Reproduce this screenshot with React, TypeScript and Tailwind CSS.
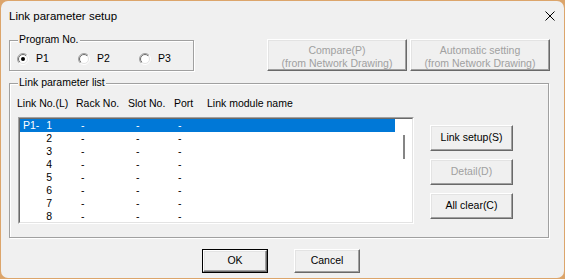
import React, { useId } from "react";

function Radio({ checked }: { checked?: boolean }) {
  const id = useId().replace(/:/g, "");
  return (
    <svg width="12" height="12" viewBox="0 0 12 12" className="shrink-0">
      <defs>
        <linearGradient id={`o${id}`} x1="0" y1="0" x2="1" y2="1">
          <stop offset="0.5" stopColor="#a0a0a0" />
          <stop offset="0.5" stopColor="#ffffff" />
        </linearGradient>
        <linearGradient id={`i${id}`} x1="0" y1="0" x2="1" y2="1">
          <stop offset="0.5" stopColor="#696969" />
          <stop offset="0.5" stopColor="#e3e3e3" />
        </linearGradient>
      </defs>
      <circle cx="6" cy="6" r="5.5" fill="none" stroke={`url(#o${id})`} strokeWidth="1" />
      <circle cx="6" cy="6" r="4.5" fill="#ffffff" stroke={`url(#i${id})`} strokeWidth="1" />
      {checked && <circle cx="6" cy="6" r="2" fill="#000000" />}
    </svg>
  );
}

function Btn({
  className,
  disabled,
  children,
}: {
  className: string;
  disabled?: boolean;
  children: React.ReactNode;
}) {
  return (
    <div
      className={`${className} flex flex-col items-center justify-center border border-t-white border-l-white border-r-[#696969] border-b-[#696969] bg-[#f0f0f0] shadow-[inset_-1px_-1px_0_#a0a0a0,inset_1px_1px_0_#e3e3e3] ${
        disabled ? "text-[#a0a0a0]" : "text-black"
      }`}
    >
      {children}
    </div>
  );
}

function Group({
  className,
  label,
  children,
}: {
  className: string;
  label: string;
  children: React.ReactNode;
}) {
  return (
    <div
      className={`${className} relative border border-[#a0a0a0] shadow-[inset_1px_1px_0_#ffffff,1px_1px_0_#ffffff]`}
    >
      <div className="absolute left-[8px] top-[-8px] bg-[#f0f0f0] px-[1px] leading-[13px]">{label}</div>
      {children}
    </div>
  );
}

const rows = ["1", "2", "3", "4", "5", "6", "7", "8"];

export default function App() {
  return (
    <div className="w-[565px] h-[279px] bg-[#dca56b] p-[1px] font-[Liberation_Sans,Arial,sans-serif] text-[10.5px] text-black">
      <div className="w-full h-full rounded-[7px] bg-[#f0f0f0] flex flex-col">
        {/* title bar */}
        <div className="h-[30px] flex items-center justify-between pl-[8px] pr-[9px] shrink-0">
          <span className="text-[11.5px] leading-[14px]">Link parameter setup</span>
          <svg width="10" height="10" viewBox="0 0 10 10">
            <path d="M0.5 0.5 L9.5 9.5 M9.5 0.5 L0.5 9.5" stroke="#000" strokeWidth="1" />
          </svg>
        </div>

        <div className="pl-[8px] flex flex-col">
          {/* top row */}
          <div className="flex items-start mt-[8px] h-[32px]">
            <Group className="mt-[1px] w-[185px] h-[31px]" label="Program No.">
              <div className="flex pl-[7px] pt-[11px]">
                <div className="w-[61px] flex items-center h-[13px]">
                  <Radio checked />
                  <span className="ml-[7px] leading-[13px]">P1</span>
                </div>
                <div className="w-[61px] flex items-center h-[13px]">
                  <Radio />
                  <span className="ml-[7px] leading-[13px]">P2</span>
                </div>
                <div className="w-[50px] flex items-center h-[13px]">
                  <Radio />
                  <span className="ml-[7px] leading-[13px]">P3</span>
                </div>
              </div>
            </Group>
            <Btn className="ml-[73px] w-[140px] h-[32px] leading-[13px] pt-[3px]" disabled>
              <span>Compare(P)</span>
              <span>(from Network Drawing)</span>
            </Btn>
            <Btn className="ml-[3px] w-[140px] h-[32px] leading-[13px] pt-[3px]" disabled>
              <span>Automatic setting</span>
              <span>(from Network Drawing)</span>
            </Btn>
          </div>

          {/* link parameter list */}
          <Group className="mt-[12px] w-[540px] h-[155px]" label="Link parameter list">
            <div className="flex pl-[7px] mt-[13px] h-[13px] leading-[13px]">
              <span className="w-[59px]">Link No.(L)</span>
              <span className="w-[52px]">Rack No.</span>
              <span className="w-[46px]">Slot No.</span>
              <span className="w-[33px]">Port</span>
              <span>Link module name</span>
            </div>
            <div className="flex items-start">
              <div className="ml-[8px] mt-[7px] w-[396px] h-[107px] border border-t-[#a0a0a0] border-l-[#a0a0a0] border-r-white border-b-white">
                <div className="w-full h-full border border-t-[#696969] border-l-[#696969] border-r-[#e3e3e3] border-b-[#e3e3e3] bg-white flex">
                  <div className="w-[375px] flex flex-col">
                    {rows.map((r, i) => (
                      <div
                        key={i}
                        className={`flex h-[13px] leading-[13px] items-center ${
                          i === 0 ? "bg-[#0078d7] text-white" : "text-black"
                        }`}
                      >
                        <span className="w-[22px] pl-[3px]">{i === 0 ? "P1-" : ""}</span>
                        <span className="w-[10px] text-right">{r}</span>
                        <span className="w-[62px] pl-[29px]">-</span>
                        <span className="w-[55px] pl-[22px]">-</span>
                        <span className="pl-[9px]">-</span>
                      </div>
                    ))}
                  </div>
                  <div className="flex-1 pl-[8px] pt-[16px]">
                    <div className="w-[2px] h-[24px] bg-[#858585]" />
                  </div>
                </div>
              </div>
              <div className="ml-[16px] mt-[15px] flex flex-col gap-[8px]">
                <Btn className="w-[83px] h-[26px]">Link setup(S)</Btn>
                <Btn className="w-[83px] h-[26px]" disabled>
                  Detail(D)
                </Btn>
                <Btn className="w-[83px] h-[26px]">All clear(C)</Btn>
              </div>
            </div>
          </Group>

          {/* bottom buttons */}
          <div className="flex mt-[11px] ml-[193px]">
            <div className="w-[66px] h-[24px] border border-black flex">
              <Btn className="w-full h-full">OK</Btn>
            </div>
            <Btn className="ml-[26px] w-[66px] h-[24px]">Cancel</Btn>
          </div>
        </div>
      </div>
    </div>
  );
}
